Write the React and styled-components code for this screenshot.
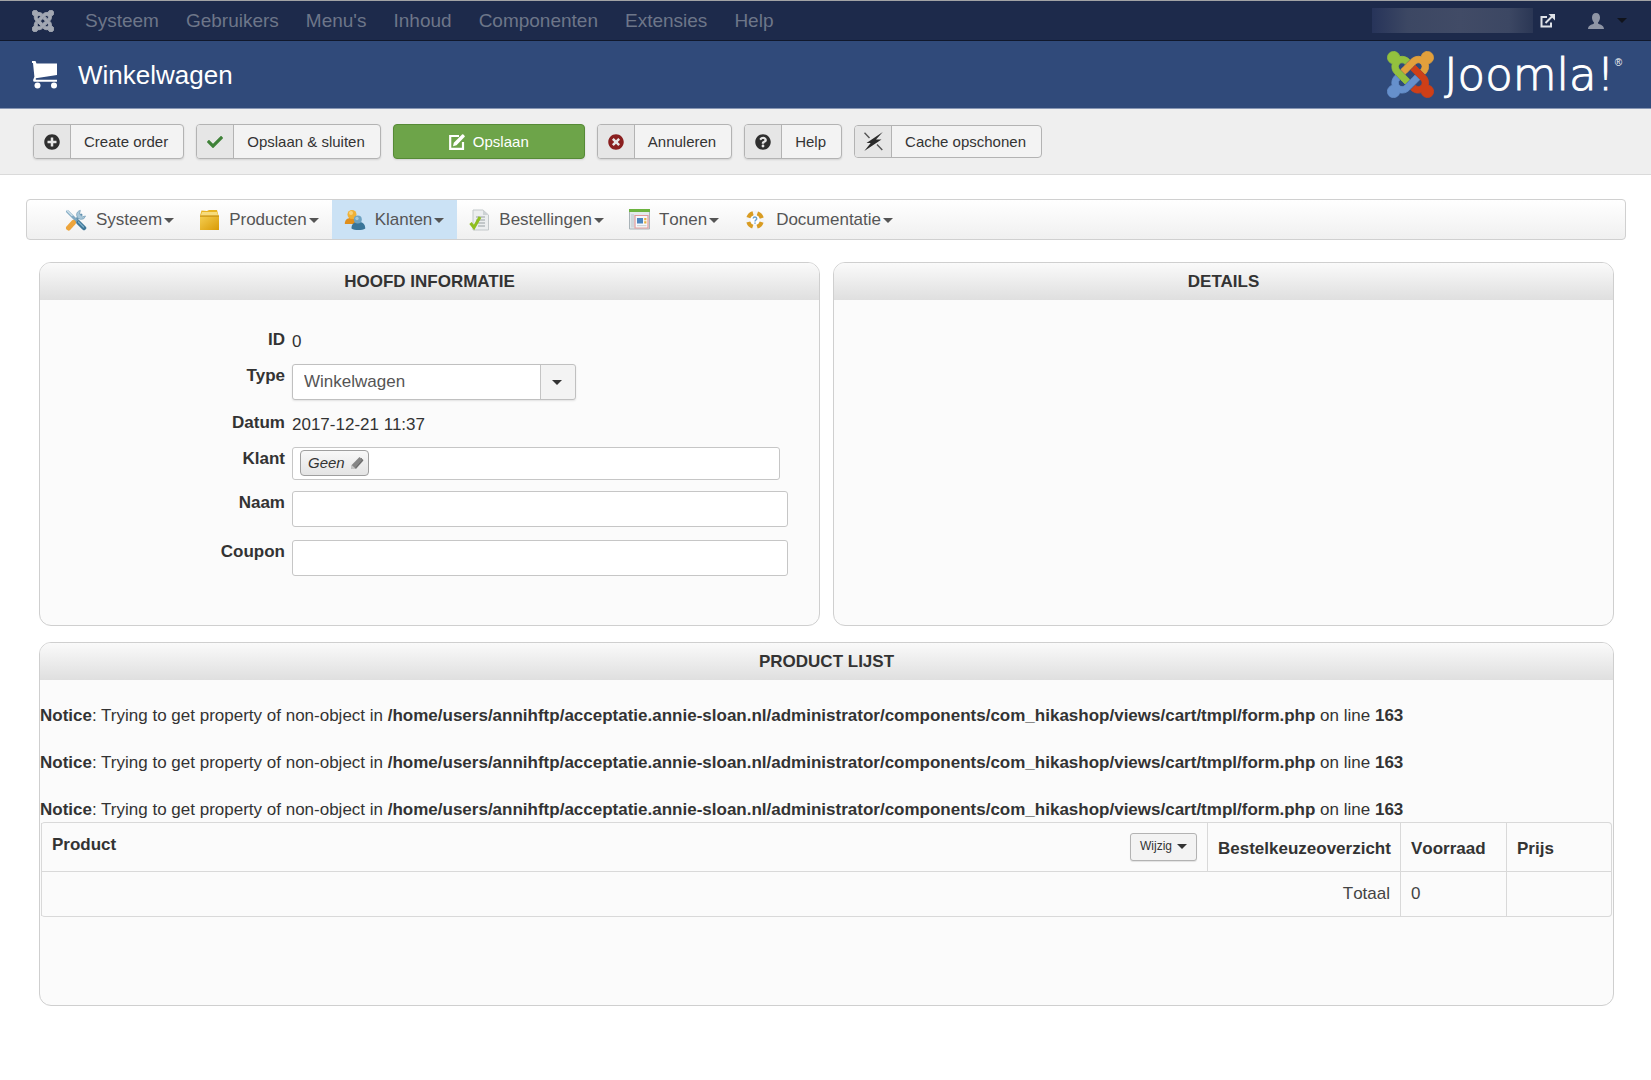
import React from "react";
import styled, { createGlobalStyle, css } from "styled-components";
import { FaPlusCircle, FaCheck, FaTimesCircle, FaQuestionCircle } from "react-icons/fa";

const GlobalStyle = createGlobalStyle`
  *, *::before, *::after { box-sizing: border-box; }
  body {
    margin: 0;
    background: #fff;
    color: #333;
    font: 17px/24px "Liberation Sans", Arial, sans-serif;
  }
  button, input, select { font: inherit; color: inherit; margin: 0; }
  a { color: inherit; text-decoration: none; }
  svg { display: block; flex: none; }
`;

/* ---------- top navigation ---------- */

const TopBar = styled.nav`
  display: flex;
  align-items: center;
  height: 41px;
  padding: 0 24px 0 32px;
  background: #1d2a4b;
  border-top: 1px solid #a2a3a5;
  border-bottom: 1px solid #10182c;
  color: #6d7689;
  font-size: 19px;
`;

const TopLinks = styled.div`
  display: flex;
  gap: 27px;
  margin-left: 31px;
  font-kerning: none;
`;

const TopTools = styled.div`
  display: flex;
  align-items: center;
  margin-left: auto;
`;

const SiteName = styled.span`
  width: 161px;
  height: 25px;
  margin-right: 7px;
  background: linear-gradient(90deg, #27345a 0%, #3c4763 22%, #414b66 55%, #3c4763 85%, #2b3755 100%);
`;

const UserMenu = styled.button`
  display: flex;
  align-items: center;
  gap: 13px;
  margin-left: 33px;
  padding: 0;
  border: 0;
  background: none;
  color: #8f95a5;
`;

const Caret = styled.span`
  display: inline-block;
  border: 5px solid transparent;
  border-top-color: ${(p) => p.$color || "#555"};
  border-bottom: 0;
`;

/* ---------- page header ---------- */

const Header = styled.header`
  display: flex;
  align-items: center;
  height: 68px;
  padding: 0 29px 0 32px;
  background: #304a7a;
  border-bottom: 1px solid #8796b3;
  color: #fff;
`;

const PageTitle = styled.h1`
  margin: 0 auto 0 20px;
  font-size: 26px;
  font-weight: 400;
  line-height: 32px;
`;

const Brand = styled.a`
  display: flex;
  align-items: center;
  gap: 10px;
`;

const BrandName = styled.span`
  display: flex;
  font-family: "DejaVu Sans Light", "DejaVu Sans", sans-serif;
  font-weight: 200;
  font-size: 45px;
  line-height: 48px;
  -webkit-text-stroke: 1px #fff;

  sup {
    font: 10px/24px "Liberation Sans", sans-serif;
    -webkit-text-stroke: 0;
  }
`;

/* ---------- toolbar ---------- */

const Toolbar = styled.div`
  display: flex;
  align-items: center;
  gap: 12px;
  padding: 15px 33px;
  background: #efefef;
  border-bottom: 1px solid #dadada;
`;

const ToolButton = styled.button`
  display: flex;
  align-items: stretch;
  height: ${(p) => (p.$flat ? 33 : 35)}px;
  padding: 0;
  border: 1px solid #b3b3b3;
  border-radius: 4px;
  background: #f3f3f3;
  box-shadow: ${(p) => (p.$flat ? "none" : "0 1px 2px rgba(0, 0, 0, 0.12)")};
  font-size: 15px;
  overflow: hidden;

  ${(p) =>
    p.$primary &&
    css`
      align-items: center;
      justify-content: center;
      gap: 8px;
      width: 192px;
      background: #6da449;
      border-color: #568a36;
      color: #fff;
    `}
`;

const ToolIcon = styled.span`
  display: flex;
  align-items: center;
  justify-content: center;
  width: 37px;
  background: #e6e6e6;
  border-right: 1px solid #b3b3b3;
  color: ${(p) => p.$color || "#2f2f2f"};
`;

const ToolLabel = styled.span`
  display: flex;
  align-items: center;
  padding: 0 15px 0 13px;
`;

/* ---------- component menu ---------- */

const Main = styled.main`
  padding: 24px 25px 32px 26px;
`;

const ShopMenu = styled.nav`
  display: flex;
  height: 41px;
  padding-left: 26px;
  border: 1px solid #d0d0d0;
  border-radius: 4px;
  background: linear-gradient(#fff, #f0f0f0);
  color: #555;
  font-kerning: none;
`;

const ShopLink = styled.a`
  display: flex;
  align-items: center;
  padding: 0 13px 0 12px;
  background: ${(p) => (p.$active ? "#cbe2f5" : "none")};

  svg { margin-right: 9px; }
  ${Caret} { margin-left: 2px; margin-top: 2px; }
`;

/* ---------- panels ---------- */

const Panels = styled.div`
  display: grid;
  grid-template-columns: 1fr 1fr;
  gap: 16px 13px;
  padding: 22px 12px 0 13px;
`;

const PanelBox = styled.section`
  grid-column: ${(p) => (p.$wide ? "1 / -1" : "auto")};
  border: 1px solid #cfcfcf;
  border-radius: 12px;
  background: #fbfbfb;
  overflow: hidden;
`;

const PanelTitle = styled.h2`
  margin: 0;
  padding: 7px 0 6px;
  background: linear-gradient(#fafafa, #dfdfdf);
  font-size: 17px;
  line-height: 24px;
  text-align: center;
  text-transform: uppercase;
`;

const Form = styled.form`
  padding: 28px 31px 36px 0;
`;

const Row = styled.div`
  display: grid;
  grid-template-columns: 245px 1fr;
  column-gap: 7px;
  align-items: start;
  padding-bottom: 10px;
`;

const Label = styled.label`
  font-weight: 700;
  text-align: right;
`;

const Value = styled.output`
  padding-top: 2px;
`;

const field = css`
  border: 1px solid #c6c6c6;
  border-radius: 3px;
  background: #fff;
`;

const TextInput = styled.input`
  && {
    ${field}
    width: 100%;
    height: 36px;
    margin-bottom: 3px;
    padding: 0 10px;
  }
`;

const SelectBox = styled.div`
  display: grid;
  align-items: center;
  justify-items: end;
  width: 284px;
  margin-bottom: 1px;

  > * { grid-area: 1 / 1; }
  ${Caret} { margin-right: 14px; pointer-events: none; }
`;

const Select = styled.select`
  appearance: none;
  width: 100%;
  height: 36px;
  padding: 0 46px 0 11px;
  border: 1px solid #c0c0c0;
  border-radius: 3px;
  background: linear-gradient(90deg, #c4c4c4 1px, #f3f3f3 1px) right / 35px 100% no-repeat #fff;
  box-shadow: 0 1px 2px rgba(0, 0, 0, 0.1);
  && { color: #555; }
`;

const CustomerBox = styled.div`
  ${field}
  display: flex;
  align-items: flex-start;
  height: 33px;
  margin: 0 8px 1px 0;
  padding: 2px 7px;
`;

const CustomerButton = styled.button`
  display: flex;
  align-items: center;
  gap: 5px;
  height: 26px;
  padding: 0 4px 0 7px;
  border: 1px solid #9f9f9f;
  border-radius: 4px;
  background: linear-gradient(#f8f8f8, #e4e4e4);
  font-size: 15px;
  font-style: italic;
`;

/* ---------- product list ---------- */

const ProductBody = styled.div`
  padding: 24px 0 88px;
`;

const Notices = styled.div`
  display: grid;
  gap: 23px;
`;

const Notice = styled.p`
  margin: 0;
`;

const Table = styled.table`
  width: calc(100% - 2px);
  margin: 0 1px;
  border: 1px solid #d9d9d9;
  border-left: 0;
  border-radius: 4px;
  border-spacing: 0;
  table-layout: fixed;
  font-kerning: none;
`;

const cell = css`
  padding: 10px;
  border-left: 1px solid #d9d9d9;
  text-align: left;
`;

const Th = styled.th`
  ${cell}
  width: ${(p) => p.$width || "auto"};
  vertical-align: bottom;
`;

const Td = styled.td`
  ${cell}
  border-top: 1px solid #d9d9d9;
  color: #444;
  text-align: ${(p) => (p.$right ? "right" : "left")};
`;

const ProductHead = styled.div`
  display: flex;
  align-items: flex-start;
  justify-content: space-between;
`;

const SmallButton = styled.button`
  display: flex;
  align-items: center;
  gap: 5px;
  height: 28px;
  padding: 0 9px 2px;
  border: 1px solid #b3b3b3;
  border-radius: 3px;
  background: #f3f3f3;
  box-shadow: 0 1px 1px rgba(0, 0, 0, 0.1);
  font-size: 12px;
  font-weight: 400;
`;

/* ---------- drawings ---------- */

const joomlaParts = [
  ["#93c13e", "M.6 92.1C.6 58.8 27.4 32 60.4 32c30 0 54.5 21.9 59.2 50.2 32.6-7.6 67.1.6 96.5 30l-44.3 44.3c-20.5-20.5-42.6-16.3-55.4-3.5-14.3 14.3-14.3 37.9 0 52.2l99.5 99.5-44 44.3c-87.7-87.2-49.7-49.7-99.8-99.7-26.8-26.5-35-64.8-24.8-98.9C20.4 144.6.6 120.7.6 92.1z"],
  ["#e2a03c", "M130.1 208.5l44.3 44.3c10-10 89.7-89.7 99.7-99.8 14.3-14.3 37.6-14.3 51.9 0 12.8 12.8 17 35-3.5 55.4l44 44.3c31.2-31.2 38.5-67.6 28.9-101.2 29.2-4.1 51.9-29.2 51.9-59.5 0-33.2-26.8-60.1-59.8-60.1-30.3 0-55.4 22.5-59.5 51.6-33.8-9.9-71.7-1.5-98.3 25.1-18.3 19.1-71.1 71.5-99.6 99.9z"],
  ["#cf3f17", "M396.4 360.7c8.2-32.7-.9-68.5-26.3-93.9-11.8-12.2 5 4.7-99.5-99.7l-44.3 44.3 99.7 99.7c14.3 14.3 14.3 37.6 0 51.9-12.8 12.8-35 17-55.4-3.5l-44 44.3c27.6 30.2 68 38.8 102.7 28 5.5 27.4 29.7 48.1 58.9 48.1 33 0 59.8-26.8 59.8-60.1 0-30.2-22.5-55-51.6-59.1z"],
  ["#6690cc", "M312.1 307.6l-44-44.3c-87 86.4-50.4 50.4-99.7 99.8-14.3 14.3-37.6 14.3-51.9 0-13.1-13.4-16.9-35.3 3.2-55.4l-44-44.3c-30.2 30.2-38 65.2-29.5 98.3-26.7 6-46.2 29.9-46.2 58.2C0 453.2 26.8 480 59.8 480c28.6 0 52.5-19.8 58.6-46.7 32.7 8.2 68.5-.6 94.2-26 32.1-32 12.2-12.4 99.5-99.7z"],
];

const JoomlaMark = ({ size, fill, weight = 8 }) => (
  <svg width={size} height={size} viewBox="-4 28 456 456" aria-hidden="true">
    {joomlaParts.map(([color, d]) => (
      <path key={color} fill={fill || color} stroke={fill || color} strokeWidth={weight} d={d} />
    ))}
  </svg>
);

const CartIcon = () => (
  <svg width="26" height="28" viewBox="0 0 26 28" fill="#fff" aria-hidden="true">
    <path d="M0 0h3.500l1 2.500h20.500V14L3.800 17.200v1.600h21.200v2H2.500a1.500 1.500 0 0 1-1.300-2l1.200-3L1 2H0z" />
    <circle cx="5.500" cy="24.500" r="3" />
    <circle cx="22" cy="24.500" r="3" />
  </svg>
);

const ExternalIcon = () => (
  <svg width="15" height="14" viewBox="0 0 15 14" fill="none" stroke="#dfe2e8" aria-hidden="true">
    <path d="M7 3H1.500v9.500H11V8.500" strokeWidth="2" />
    <path d="M5.500 9 12 2.500" strokeWidth="2" />
    <path d="M8.500 0H15v6.500z" fill="#dfe2e8" stroke="none" />
  </svg>
);

const UserIcon = () => (
  <svg width="16" height="16" viewBox="0 0 16 16" fill="currentColor" aria-hidden="true">
    <path d="M8 0c2.600 0 4 1.900 4 4.500 0 2-.8 3.900-2 5v1c1 .9 6 1.600 6 5.500H0c0-3.900 5-4.600 6-5.500v-1c-1.200-1.100-2-3-2-5C4 1.900 5.400 0 8 0z" />
  </svg>
);

const EditIcon = () => (
  <svg width="16" height="16" viewBox="0 0 16 16" aria-hidden="true">
    <path d="M10 2H1.200v12.800H14V8" fill="none" stroke="#fff" strokeWidth="2.200" />
    <path d="M4 12.200l.8-3.400L12.600 1l.4-.4a1 1 0 0 1 1.400 0l1.100 1.100a1 1 0 0 1 0 1.400L7.500 11.200z" fill="#fff" />
  </svg>
);

const BoltIcon = () => (
  <svg width="19" height="19" viewBox="0 0 19 19" aria-hidden="true">
    <path d="M18.800 0 12 7.600h5.500L.3 19l6.400-8H2.500z" fill="#2b2b2b" />
    <path d="M.5.8 5.500 6M13 12.500l5.300 5.500" stroke="#555" strokeWidth="1.400" />
  </svg>
);

const PencilIcon = () => (
  <svg width="14" height="14" viewBox="0 0 14 14" aria-hidden="true">
    <path d="M9.500 1 13.500 4.500 6 13 1.500 13l.2-4z" fill="#858585" />
    <path d="M1.700 9 6 13H1.500z" fill="#c4c4c4" />
    <path d="m11 2.300 1.700 1.600-7 8" fill="none" stroke="#666" />
  </svg>
);

const ToolsIcon = () => (
  <svg width="22" height="22" viewBox="0 0 22 22" fill="none" strokeLinecap="round" aria-hidden="true">
    <path d="M16 6 5 17" stroke="#5f8fae" strokeWidth="3" />
    <path d="M15 1.500a4.500 4.500 0 1 0 5.500 5.500l-3 .8-2.800-2.600z" fill="#a9c8da" stroke="#7ba3bb" strokeWidth=".8" />
    <path d="m2.500 2.500 8 8" stroke="#7fa9c3" strokeWidth="3" />
    <path d="m2 1.500 5 5" stroke="#cfe0ea" strokeWidth="1.500" />
    <path d="M8.500 13.500 3.500 19" stroke="#eda53c" strokeWidth="5" />
    <path d="m13.500 13.500 5.500 5.500" stroke="#3f7797" strokeWidth="4.500" />
    <path d="m13.500 13 5 5" stroke="#7fb0cb" strokeWidth="1.200" />
  </svg>
);

const BoxIcon = () => (
  <svg width="21" height="22" viewBox="0 0 21 22" aria-hidden="true">
    <defs>
      <linearGradient id="box" x1="0" y1="0" x2="1" y2="1">
        <stop offset="0" stopColor="#f5cf52" />
        <stop offset="1" stopColor="#d99a05" />
      </linearGradient>
    </defs>
    <path d="M2.500 1.500 8 2l2-1h8l1.500 5.500H1z" fill="#e9b423" />
    <path d="M3 3h15l1 3H2z" fill="#f7dc7c" />
    <path d="M1 6.500h19V21H1z" fill="url(#box)" />
    <path d="M1 6.500h19v1.200H1z" fill="#c99311" />
  </svg>
);

const UsersIcon = () => (
  <svg width="22" height="22" viewBox="0 0 22 22" aria-hidden="true">
    <path d="M.8 15c0-4 2.200-6 6-6s6 2 6 6z" fill="#e08f1c" />
    <circle cx="8" cy="5.500" r="4.500" fill="#f0b136" />
    <circle cx="7" cy="4" r="2" fill="#f8d27a" />
    <path d="M7.500 19.500c0-4.500 2.500-6.800 6.800-6.800s7 2.300 7 6.800c-3 2-10.800 2-13.800 0z" fill="#3a7599" />
    <circle cx="13.800" cy="10.500" r="4" fill="#6fa3c2" />
    <circle cx="13" cy="9.500" r="1.700" fill="#a3c9de" />
  </svg>
);

const OrderIcon = () => (
  <svg width="21" height="22" viewBox="0 0 21 22" aria-hidden="true">
    <path d="M4 1h10l5.500 5v15H4z" fill="#eceeef" stroke="#c3c8ca" />
    <path d="M14 1v5h5.500z" fill="#cdd2d4" />
    <path d="M7 8h9M7 11h9M7 14h9M9 17h7" stroke="#b4babd" strokeWidth="1.300" />
    <path d="m1.500 14 3.500 4.500L11 8" fill="none" stroke="#8fbf1f" strokeWidth="3" />
  </svg>
);

const DisplayIcon = () => (
  <svg width="21" height="21" viewBox="0 0 21 21" aria-hidden="true">
    <path d="M.5 1h20v19H.5z" fill="#e4e9ec" stroke="#a9b3b8" />
    <path d="M0 0h21v3H0z" fill="#6cb33f" />
    <path d="M2 5h3v13.500H2z" fill="#cfd7db" />
    <path d="M6 6.500h13V19H6z" fill="#f6f8fb" stroke="#e29a9a" strokeWidth="1.200" />
    <path d="M8 9h6v5.500H8z" fill="#4d86c0" />
    <path d="M15.200 9h2.200v2.200h-2.200zM15.200 12.300h2.200v2.200h-2.200z" fill="#e9b13c" />
    <path d="M8 16.700h9.500" stroke="#c6ccd0" />
  </svg>
);

const HelpRingIcon = () => (
  <svg width="23" height="20" viewBox="0 0 23 20" aria-hidden="true">
    <circle cx="11" cy="10" r="9.500" fill="#f4f5f6" />
    <circle cx="11" cy="10" r="7" fill="none" stroke="#d99c22" strokeWidth="4" strokeDasharray="6.600 4.400" strokeDashoffset="-2.200" />
    <circle cx="11" cy="10" r="4.500" fill="#fff" />
    <path d="M9.200 8.500c.2-2 3.600-1.800 3.500.2 0 1.300-1.700 1.300-1.700 2.800M11 12.500v1.300" fill="none" stroke="#6aa2cf" strokeWidth="1.500" />
  </svg>
);

/* ---------- data ---------- */

const topLinks = ["Systeem", "Gebruikers", "Menu's", "Inhoud", "Componenten", "Extensies", "Help"];

const shopLinks = [
  { label: "Systeem", Icon: ToolsIcon },
  { label: "Producten", Icon: BoxIcon },
  { label: "Klanten", Icon: UsersIcon, active: true },
  { label: "Bestellingen", Icon: OrderIcon },
  { label: "Tonen", Icon: DisplayIcon },
  { label: "Documentatie", Icon: HelpRingIcon },
];

const noticeFile =
  "/home/users/annihftp/acceptatie.annie-sloan.nl/administrator/components/com_hikashop/views/cart/tmpl/form.php";

const Tool = ({ icon, color, label, flat }) => (
  <ToolButton type="button" $flat={flat}>
    <ToolIcon $color={color}>{icon}</ToolIcon>
    <ToolLabel>{label}</ToolLabel>
  </ToolButton>
);

const Panel = ({ title, wide, children }) => (
  <PanelBox $wide={wide}>
    <PanelTitle>{title}</PanelTitle>
    {children}
  </PanelBox>
);

export default function App() {
  return (
    <>
      <GlobalStyle />
      <TopBar>
        <a href="#joomla" aria-label="Joomla">
          <JoomlaMark size={22} fill="#a3a8b3" weight={20} />
        </a>
        <TopLinks>
          {topLinks.map((label) => (
            <a key={label} href="#menu">{label}</a>
          ))}
        </TopLinks>
        <TopTools>
          <SiteName />
          <a href="#site" aria-label="Site"><ExternalIcon /></a>
          <UserMenu type="button" aria-label="Gebruiker">
            <UserIcon />
            <Caret $color="#10131c" />
          </UserMenu>
        </TopTools>
      </TopBar>

      <Header>
        <CartIcon />
        <PageTitle>Winkelwagen</PageTitle>
        <Brand href="#joomla">
          <JoomlaMark size={47} />
          <BrandName>Joomla!<sup>®</sup></BrandName>
        </Brand>
      </Header>

      <Toolbar>
        <Tool icon={<FaPlusCircle size={16} />} label="Create order" />
        <Tool icon={<FaCheck size={16} />} color="#3f8238" label="Opslaan & sluiten" />
        <ToolButton type="button" $primary>
          <EditIcon />
          Opslaan
        </ToolButton>
        <Tool icon={<FaTimesCircle size={16} />} color="#8a1f1f" label="Annuleren" />
        <Tool icon={<FaQuestionCircle size={16} />} label="Help" />
        <Tool icon={<BoltIcon />} label="Cache opschonen" flat />
      </Toolbar>

      <Main>
        <ShopMenu>
          {shopLinks.map(({ label, Icon, active }) => (
            <ShopLink key={label} href="#shop" $active={active}>
              <Icon />
              {label}
              <Caret />
            </ShopLink>
          ))}
        </ShopMenu>

        <Panels>
          <Panel title="Hoofd informatie">
            <Form>
              <Row>
                <Label htmlFor="cart-id">ID</Label>
                <Value id="cart-id">0</Value>
              </Row>
              <Row>
                <Label htmlFor="cart-type">Type</Label>
                <SelectBox>
                  <Select id="cart-type" defaultValue="cart">
                    <option value="cart">Winkelwagen</option>
                  </Select>
                  <Caret $color="#333" />
                </SelectBox>
              </Row>
              <Row>
                <Label htmlFor="cart-date">Datum</Label>
                <Value id="cart-date">2017-12-21 11:37</Value>
              </Row>
              <Row>
                <Label htmlFor="cart-customer">Klant</Label>
                <CustomerBox>
                  <CustomerButton id="cart-customer" type="button">
                    Geen
                    <PencilIcon />
                  </CustomerButton>
                </CustomerBox>
              </Row>
              <Row>
                <Label htmlFor="cart-name">Naam</Label>
                <TextInput id="cart-name" type="text" />
              </Row>
              <Row>
                <Label htmlFor="cart-coupon">Coupon</Label>
                <TextInput id="cart-coupon" type="text" />
              </Row>
            </Form>
          </Panel>

          <Panel title="Details" />

          <Panel title="Product lijst" wide>
            <ProductBody>
              <Notices>
                {[1, 2, 3].map((n) => (
                  <Notice key={n}>
                    <b>Notice</b>: Trying to get property of non-object in <b>{noticeFile}</b> on line <b>163</b>
                  </Notice>
                ))}
              </Notices>
              <Table>
                <thead>
                  <tr>
                    <Th>
                      <ProductHead>
                        Product
                        <SmallButton type="button">
                          Wijzig
                          <Caret $color="#333" />
                        </SmallButton>
                      </ProductHead>
                    </Th>
                    <Th $width="193px">Bestelkeuzeoverzicht</Th>
                    <Th $width="106px">Voorraad</Th>
                    <Th $width="105px">Prijs</Th>
                  </tr>
                </thead>
                <tbody>
                  <tr>
                    <Td colSpan={2} $right>Totaal</Td>
                    <Td>0</Td>
                    <Td />
                  </tr>
                </tbody>
              </Table>
            </ProductBody>
          </Panel>
        </Panels>
      </Main>
    </>
  );
}
